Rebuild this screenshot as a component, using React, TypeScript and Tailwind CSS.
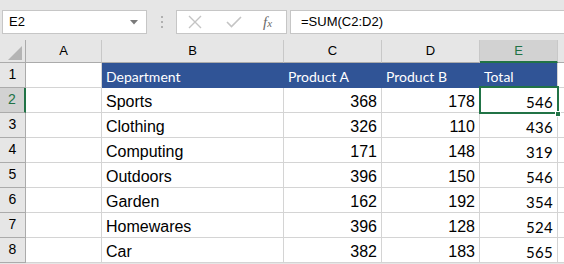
import React from "react";

const rows = [
  ["Sports", 368, 178, 546],
  ["Clothing", 326, 110, 436],
  ["Computing", 171, 148, 319],
  ["Outdoors", 396, 150, 546],
  ["Garden", 162, 192, 354],
  ["Homewares", 396, 128, 524],
  ["Car", 382, 183, 565],
] as const;

const arial = "font-['Liberation_Sans',Arial,sans-serif]";
const cal = "font-['Lato','Open_Sans',sans-serif]";

function ColHead({ label, selected }: { label: string; selected?: boolean }) {
  return (
    <div
      className={
        "flex items-center justify-center border-r border-[#c8c8c8] text-[13px] " +
        arial +
        (selected
          ? " bg-[#d2d2d2] text-[#217346] border-b-2 border-b-[#217346]"
          : " bg-[#e6e6e6] text-[#000] border-b border-b-[#ababab]")
      }
    >
      {label}
    </div>
  );
}

function RowHead({ n, selected }: { n: number; selected?: boolean }) {
  return (
    <div
      className={
        "flex items-end justify-center pb-[2px] border-b text-[14px] " +
        arial +
        (selected
          ? " bg-[#d2d2d2] text-[#217346] border-r-2 border-r-[#217346] border-b-[#ababab]"
          : " bg-[#e6e6e6] text-black border-r border-r-[#ababab] border-b-[#ababab]")
      }
    >
      {n}
    </div>
  );
}

function Cell({
  children,
  className = "",
  head,
  last,
}: {
  children?: React.ReactNode;
  className?: string;
  head?: boolean;
  last?: boolean;
}) {
  const base = head
    ? "bg-[#305496] text-white text-[14px] border-b border-b-[#305496] " +
      (last ? "border-r border-r-[#d4d4d4] " : "border-r border-r-[#305496] ") +
      cal
    : "bg-white border-r border-b border-[#d4d4d4]";
  return (
    <div className={"flex items-end px-[4px] pb-[1px] leading-[18px] " + base + " " + className}>
      {children}
    </div>
  );
}

export default function App() {
  return (
    <div className={"w-[564px] h-[264px] overflow-hidden bg-[#e6e6e6] " + arial}>
      {/* toolbar */}
      <div className="h-[40px] flex items-start pt-[10px]">
        <div className="ml-[2px] w-[145px] h-[24px] bg-white border border-[#c6c6c6] flex items-center pl-[6px] pr-[8px] text-[13px] text-black">
          <span className="flex-1">E2</span>
          <svg width="8" height="5" viewBox="0 0 8 5">
            <path d="M0 0 L8 0 L4 4.5 Z" fill="#7a7a7a" />
          </svg>
        </div>
        <div className="w-[29px] h-[24px] flex flex-col items-center justify-center gap-[3px]">
          <div className="w-[2px] h-[2px] bg-[#b0b0b0]" />
          <div className="w-[2px] h-[2px] bg-[#b0b0b0]" />
          <div className="w-[2px] h-[2px] bg-[#b0b0b0]" />
        </div>
        <div className="w-[111px] h-[24px] bg-white border border-[#c6c6c6] flex items-center">
          <svg width="16" height="14" viewBox="0 0 16 14" className="ml-[10px]">
            <path d="M2 1 L14 13 M14 1 L2 13" stroke="#c4c4c4" strokeWidth="1.4" fill="none" />
          </svg>
          <svg width="16" height="12" viewBox="0 0 16 12" className="ml-[23px]">
            <path d="M1 6 L5.5 10.5 L15 1" stroke="#c4c4c4" strokeWidth="1.6" fill="none" />
          </svg>
          <span className="ml-[21px] text-[15px] italic text-[#6a6a6a] font-['Liberation_Serif',serif] leading-none">
            f<span className="text-[11px]">x</span>
          </span>
        </div>
        <div className="ml-[3px] flex-1 h-[24px] bg-white border border-[#c6c6c6] border-r-0 flex items-center pl-[10px] text-[13px] text-black">
          =SUM(C2:D2)
        </div>
      </div>

      {/* grid */}
      <div className="relative">
        <div className="grid grid-cols-[26px_76px_182px_98px_98px_78px_1fr] grid-rows-[23px_repeat(8,25px)]">
          {/* header row */}
          <div className="bg-[#e6e6e6] border-r border-b border-[#ababab] flex items-end justify-end pr-[3px] pb-[2px]">
            <svg width="14" height="14" viewBox="0 0 14 14">
              <path d="M14 0 L14 14 L0 14 Z" fill="#b4b4b4" />
            </svg>
          </div>
          <ColHead label="A" />
          <ColHead label="B" />
          <ColHead label="C" />
          <ColHead label="D" />
          <ColHead label="E" selected />
          <div className="bg-[#e6e6e6] border-b border-[#ababab]" />

          {/* row 1 */}
          <RowHead n={1} />
          <Cell />
          <Cell head>Department</Cell>
          <Cell head>Product A</Cell>
          <Cell head>Product B</Cell>
          <Cell head last>Total</Cell>
          <Cell className="border-r-0" />

          {rows.map((r, i) => (
            <React.Fragment key={r[0]}>
              <RowHead n={i + 2} selected={i === 0} />
              <Cell />
              <Cell className="text-[16px] text-black">{r[0]}</Cell>
              <Cell className="justify-end text-[16px] text-black">{r[1]}</Cell>
              <Cell className="justify-end text-[16px] text-black">{r[2]}</Cell>
              <Cell className={"justify-end text-[15px] tracking-[0.3px] text-black " + cal}>{r[3]}</Cell>
              <Cell className="border-r-0" />
            </React.Fragment>
          ))}
        </div>

        {/* selection overlay */}
        <div className="absolute left-[479px] top-[46px] w-[80px] h-[28px] border-2 border-[#217346] pointer-events-none" />
        <div className="absolute left-[555px] top-[71px] w-[6px] h-[6px] bg-[#217346] border border-white pointer-events-none" />
      </div>
    </div>
  );
}
